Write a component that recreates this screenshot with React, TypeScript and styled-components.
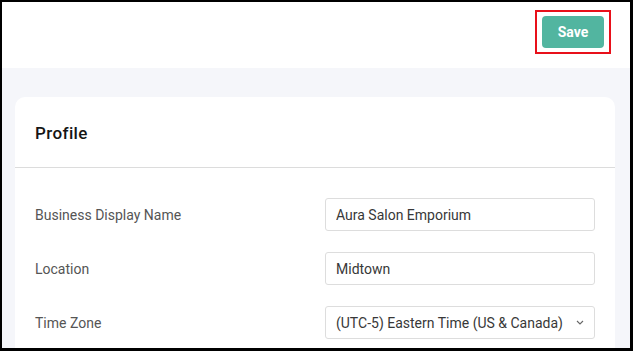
import React from 'react';
import styled, { createGlobalStyle } from 'styled-components';

const GlobalStyle = createGlobalStyle`
  html, body {
    margin: 0;
    padding: 0;
    background: #ffffff;
  }
  * {
    box-sizing: border-box;
  }
`;

const Frame = styled.div`
  width: 633px;
  height: 351px;
  border-style: solid;
  border-color: #000;
  border-width: 2px 3px 3px 2px;
  overflow: hidden;
  display: flex;
  flex-direction: column;
  font-family: Roboto, 'Liberation Sans', sans-serif;
`;

const TopBar = styled.div`
  height: 66px;
  flex: none;
  background: #ffffff;
  display: flex;
  justify-content: flex-end;
  align-items: flex-start;
  padding: 8px 19px 0 0;
`;

const Highlight = styled.div`
  border: 2px solid #e8101a;
  padding: 4px 5px;
  display: flex;
`;

const SaveButton = styled.button`
  width: 62px;
  height: 32px;
  border: none;
  border-radius: 4px;
  background: #52b5a0;
  color: #ffffff;
  font-family: Roboto, 'Liberation Sans', sans-serif;
  font-size: 14px;
  font-weight: 700;
  cursor: pointer;
`;

const Content = styled.div`
  flex: 1;
  background: #f5f6fa;
  padding: 29px 15px 0 13px;
`;

const Card = styled.div`
  background: #ffffff;
  border-radius: 10px 10px 0 0;
  height: 100%;
`;

const CardHeader = styled.div`
  height: 71px;
  display: flex;
  align-items: center;
  padding: 2px 20px 0;
  border-bottom: 1px solid #dcdcdc;
  font-size: 17px;
  font-weight: 500;
  color: #151515;
  letter-spacing: 0.4px;
`;

const CardBody = styled.div`
  padding: 30px 20px 0;
  display: flex;
  flex-direction: column;
  gap: 21px;
`;

const FieldRow = styled.div`
  display: grid;
  grid-template-columns: 1fr 270px;
  align-items: center;
  height: 33px;
`;

const Label = styled.label`
  font-size: 14px;
  color: #555555;
`;

const TextInput = styled.input`
  height: 33px;
  width: 100%;
  border: 1px solid #dddddd;
  border-radius: 3px;
  padding: 0 10px;
  font-family: Roboto, 'Liberation Sans', sans-serif;
  font-size: 14px;
  color: #383838;
  outline: none;
`;

const SelectBox = styled.div`
  height: 33px;
  border: 1px solid #dddddd;
  border-radius: 3px;
  padding: 0 10px;
  display: flex;
  align-items: center;
  justify-content: space-between;
  font-size: 14px;
  color: #383838;
`;

const Chevron = () => (
  <svg width="8" height="5" viewBox="0 0 8 5" fill="none">
    <path d="M1 1l3 3 3-3" stroke="#666" strokeWidth="1.1" />
  </svg>
);

const App = () => {
  return (
    <>
      <GlobalStyle />
      <Frame>
        <TopBar>
          <Highlight>
            <SaveButton>Save</SaveButton>
          </Highlight>
        </TopBar>
        <Content>
          <Card>
            <CardHeader>Profile</CardHeader>
            <CardBody>
              <FieldRow>
                <Label>Business Display Name</Label>
                <TextInput defaultValue="Aura Salon Emporium" />
              </FieldRow>
              <FieldRow>
                <Label>Location</Label>
                <TextInput defaultValue="Midtown" />
              </FieldRow>
              <FieldRow>
                <Label>Time Zone</Label>
                <SelectBox>
                  <span>(UTC-5) Eastern Time (US &amp; Canada)</span>
                  <Chevron />
                </SelectBox>
              </FieldRow>
            </CardBody>
          </Card>
        </Content>
      </Frame>
    </>
  );
};

export default App;
